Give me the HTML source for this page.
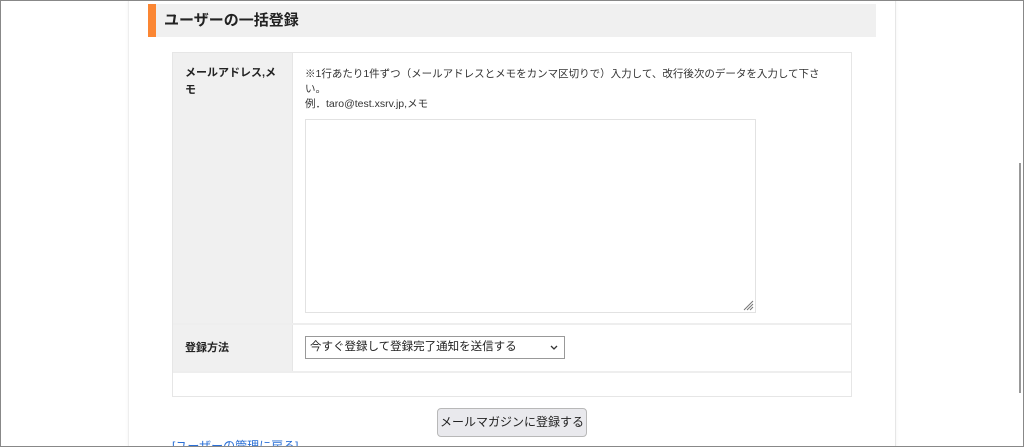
<!DOCTYPE html>
<html><head><meta charset="utf-8"><style>
*{box-sizing:border-box;margin:0;padding:0}
html,body{width:1024px;height:447px;overflow:hidden}
body{background:#fff;font-family:"Liberation Sans","Noto Sans CJK JP",sans-serif;position:relative;color:#333}
.frame{position:absolute;left:0;top:0;width:1024px;height:447px;border:1px solid #888;pointer-events:none;z-index:10}
.panel{position:absolute;left:128px;top:0;width:768px;height:447px;background:#fff;border-left:1px solid #eee;border-right:1px solid #e6e6e6;box-shadow:0 0 3px rgba(0,0,0,.06)}
.h{position:absolute;left:148px;top:4px;width:728px;height:33px;background:#f0f0f0;border-left:8px solid #fb8633;font-weight:bold;font-size:15px;line-height:33px;padding-left:8px;color:#222}
.t{position:absolute;left:172px;top:52px;width:680px;height:345px;border:1px solid #e6e6e6}
.th{position:absolute;left:0;width:120px;background:#f0f0f0;border-right:1px solid #e6e6e6;font-weight:bold;font-size:11px;color:#222;padding:12px 12px}
.row{position:absolute;left:0;width:678px;border-bottom:2px solid #eee}
.txt{position:absolute;left:132px;top:14px;font-size:10.5px;line-height:15px;color:#333;width:545px;white-space:nowrap}
.ta{position:absolute;left:132px;top:66px;width:451px;height:194px;border:1px solid #e2e2e2}
.sel{position:absolute;left:132px;top:11px;width:260px;height:23px;border:1px solid #999;font-size:11.5px;line-height:21px;padding-left:4px;color:#222;white-space:nowrap}
.btn{position:absolute;left:437px;top:408px;width:150px;height:29px;background:#e9e9ed;border:1px solid #b8b8b8;border-radius:4px;font-size:12px;line-height:27px;text-align:center;color:#222;white-space:nowrap}
.lnk{position:absolute;left:172px;top:437px;font-size:12px;color:#2a6fd6;white-space:nowrap}
.sb{position:absolute;left:1019px;top:163px;width:2px;height:230px;background:#999}
</style></head><body>
<div class="panel"></div>
<div class="h">ユーザーの一括登録</div>
<div class="t">
 <div class="row" style="top:0;height:272px">
  <div class="th" style="top:0;height:270px;line-height:17px">メールアドレス,メモ</div>
  <div class="txt">※1行あたり1件ずつ（メールアドレスとメモをカンマ区切りで）入力して、改行後次のデータを入力して下さ<br>い。<br>例．taro@test.xsrv.jp,メモ</div>
  <div class="ta"><svg style="position:absolute;right:1px;bottom:1px" width="12" height="12"><path d="M11 2L2 11M11 5L5 11M11 8L8 11" stroke="#777" stroke-width="1"/></svg></div>
 </div>
 <div class="row" style="top:272px;height:48px">
  <div class="th" style="top:0;height:46px;line-height:22px">登録方法</div>
  <div class="sel">今すぐ登録して登録完了通知を送信する<svg style="position:absolute;right:6px;top:8px" width="8" height="6"><path d="M1 1L4 4L7 1" stroke="#333" stroke-width="1.3" fill="none"/></svg></div>
 </div>
</div>
<div class="btn">メールマガジンに登録する</div>
<div class="lnk">[ユーザーの管理に戻る]</div>
<div class="sb"></div>
<div class="frame"></div>
</body></html>
